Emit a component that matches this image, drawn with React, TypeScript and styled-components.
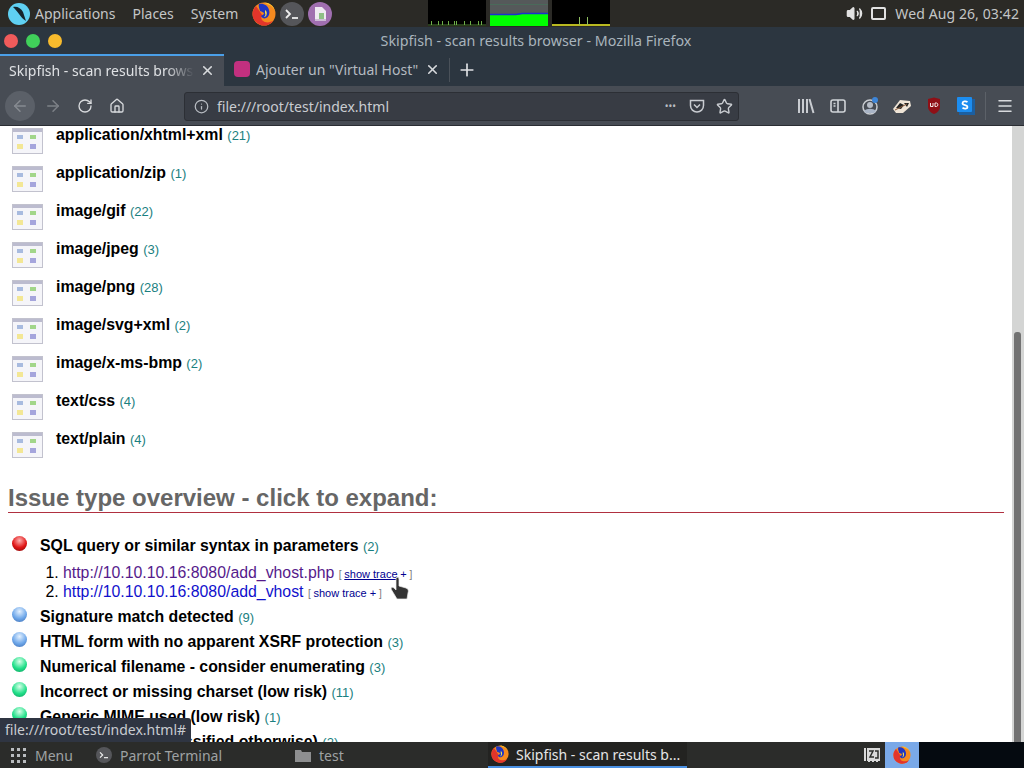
import React from "react";
import styled, { createGlobalStyle } from "styled-components";
import { ArrowLeft, ArrowRight, RotateCw, Home, Info, Plus, X, Star, Menu as MenuIcon, Volume2 } from "lucide-react";

const GlobalStyle = createGlobalStyle`
  html, body {
    margin: 0;
    padding: 0;
    background: #fff;
  }
  body {
    font-family: "Noto Sans", sans-serif;
  }
`;

const FirefoxLogo = ({ size }: { size: number }) => (
  <svg width={size} height={size} viewBox="0 0 24 24">
    <circle cx="12" cy="12" r="11.500" fill="#f58a1f" />
    <path d="M.5 12a11.500 11.500 0 0 0 21 6.500c-3 2-8 3-11 0-2-2-1-4 0-5L4 4C2 6 .5 9 .5 12z" fill="#e3352b" />
    <path d="M12 .5c5 0 10 3 11 9-1-3-3-6-7-7z" fill="#fdc62f" />
    <path d="M7 2c4-1 9 1 10 6 1 3 0 7-3 8-2 1-4 0-5-2l3-2c0-2-2-2-4-3 0-2-2-4-1-7z" fill="#1f36c4" />
    <path d="M13 8c2 1 2 3 1.500 5-.5 1.500-1.500 2-2.500 2 1-1 2-2 1-4z" fill="#f7e04a" />
  </svg>
);

const ParrotLogo = () => (
  <svg width="22" height="22" viewBox="0 0 22 22">
    <circle cx="11" cy="11" r="11" fill="#5fd0f2" />
    <path d="M5 4c4-1 8 1 10 5 1 3 2 6 3 9-3-2-5-4-7-7C9 8 7 6 5 4z" fill="#16242c" />
  </svg>
);

const TerminalGlyph = ({ size }: { size: number }) => (
  <svg width={size} height={size} viewBox="0 0 24 24">
    <circle cx="12" cy="12" r="12" fill="#55565a" />
    <path d="M6 8l4 4-4 4" fill="none" stroke="#eee" strokeWidth="1.8" />
    <path d="M12 16h6" stroke="#eee" strokeWidth="1.8" />
  </svg>
);

const NotesGlyph = () => (
  <svg width="24" height="24" viewBox="0 0 24 24">
    <circle cx="12" cy="12" r="12" fill="#a06fb0" />
    <path d="M7 5h7l4 4v10H7z" fill="#efe9f2" />
    <path d="M11 11h5v6h-5z" fill="#8fbf86" />
    <path d="M7 17h11v2H7z" fill="#cdbcd6" />
  </svg>
);

const Graph = ({ kind }: { kind: "cpu" | "mem" | "net" }) => {
  if (kind === "mem") {
    return (
      <svg width="58" height="26" viewBox="0 0 58 26">
        <rect width="58" height="26" fill="#55595a" />
        <rect y="4" width="58" height="1" fill="#4a6a5a" />
        <path d="M0 15h26l6-1h26v12H0z" fill="#00ff00" />
        <path d="M0 14.500h26l6-1h26" stroke="#1a2fd0" strokeWidth="1.6" fill="none" />
      </svg>
    );
  }
  const colour = kind === "cpu" ? "#6fae4a" : "#b8b820";
  const spikes = kind === "cpu" ? [3, 10, 14, 20, 26, 28, 36, 42, 50, 53] : [27, 35];
  return (
    <svg width="58" height="26" viewBox="0 0 58 26">
      <rect width="58" height="26" fill="#000" />
      <rect y="24" width="58" height="2" fill={colour} opacity={kind === "cpu" ? 0.35 : 1} />
      {spikes.map((x) => (
        <rect key={x} x={x} y={kind === "cpu" ? 21 : 17} width="1" height={kind === "cpu" ? 4 : 8} fill={kind === "cpu" ? colour : "#8fbf60"} />
      ))}
    </svg>
  );
};

const MimeIcon = () => (
  <svg width="31" height="26" viewBox="0 0 31 26">
    <rect x="0.5" y="0.5" width="30" height="25" fill="#f5f5f9" stroke="#c2c2ce" />
    <rect x="1" y="1" width="29" height="3" fill="#bcbccf" />
    <rect x="5" y="7" width="6" height="4" fill="#a8bbdf" />
    <rect x="18" y="7" width="6" height="4" fill="#a2d68a" />
    <rect x="5" y="16" width="6" height="5" fill="#f3e795" />
    <rect x="18" y="16" width="6" height="5" fill="#a5a5dc" />
  </svg>
);

const LibraryGlyph = () => (
  <svg width="18" height="18" viewBox="0 0 18 18" fill="none" stroke="#c9ccd1" strokeWidth="2">
    <path d="M2 2v14M6 2v14M10 2v14M12.500 2l4 14" />
  </svg>
);

const SidebarGlyph = () => (
  <svg width="18" height="18" viewBox="0 0 18 18" fill="none" stroke="#d0d3d7" strokeWidth="1.600">
    <rect x="2" y="3" width="14" height="12" rx="2" />
    <path d="M9 3v12M4.500 6.500h2M4.500 9h2" />
  </svg>
);

const AccountGlyph = () => (
  <svg width="20" height="20" viewBox="0 0 20 20">
    <circle cx="10" cy="11" r="7" fill="none" stroke="#c9ccd1" strokeWidth="1.500" />
    <circle cx="10" cy="9" r="3" fill="#b6bcc6" />
    <path d="M4 15c3-3 9-3 12 0l-2 2H6z" fill="#a9b4c6" />
    <circle cx="15" cy="4" r="3" fill="#3d85d8" />
  </svg>
);

const MaskGlyph = () => (
  <svg width="20" height="16" viewBox="0 0 20 16">
    <path d="M1 11L8 2l10 1 1 5-8 7H4z" fill="#efe4d6" />
    <path d="M4 10l4-5 4 2-3 4zM12 5l5 0-2 4z" fill="#232323" />
    <path d="M3 12l12-6" stroke="#8a5a3a" strokeWidth="1" />
  </svg>
);

const ShieldGlyph = () => (
  <svg width="16" height="18" viewBox="0 0 16 18">
    <path d="M2 2l6-1.500 6 1.500v8c0 3-3 6-6 7-3-1-6-4-6-7z" fill="#8f0f16" />
    <path d="M4.500 6v3.500h2.500V6M9 6h1.500a1.800 1.800 0 0 1 0 3.500H9z" fill="none" stroke="#f3e6e6" strokeWidth="1" />
  </svg>
);

const SkypeGlyph = () => (
  <svg width="18" height="18" viewBox="0 0 18 18">
    <rect x="2" y="2" width="16" height="16" fill="#1c5fa0" />
    <rect x="0" y="0" width="15" height="15" rx="1" fill="#1c8df0" />
    <path d="M10.500 5c-2-1.200-5-.6-5 1.200 0 2.600 5 1.400 5 3.800 0 1.800-3 2-5 .8" fill="none" stroke="#fff" strokeWidth="1.800" />
  </svg>
);

const PocketGlyph = () => (
  <svg width="16" height="16" viewBox="0 0 16 16" fill="none" stroke="#c9ccd1" strokeWidth="1.500">
    <path d="M1.500 2.500h13v5a6.500 6.500 0 0 1-13 0z" />
    <path d="M5 6.500l3 3 3-3" />
  </svg>
);

const GridGlyph = () => (
  <svg width="17" height="16" viewBox="0 0 17 16" fill="#b9bcbf">
    {[1, 7, 13].flatMap((y) =>
      [1, 7, 13].map((x) => <rect key={`${x}-${y}`} x={x} y={y} width="3" height="3" />)
    )}
  </svg>
);

const FolderGlyph = () => (
  <svg width="16" height="14" viewBox="0 0 16 14" fill="#8e8f90">
    <path d="M0 2h6l1 2h9v10H0z" />
  </svg>
);

const TrayGlyph = () => (
  <svg width="17" height="16" viewBox="0 0 17 16">
    <path d="M1 1h2v13H1zM4 1h13v13h-2v1h-2v-1h-2v1H9v-1H7v1H5v-1H4z" fill="#d9d9d9" />
    <path d="M6 4h4L7 10h4M12 4h3v7h-3" fill="none" stroke="#2b2c2a" strokeWidth="1.500" />
  </svg>
);

const HandCursor = () => (
  <svg width="20" height="24" viewBox="0 0 20 24">
    <path d="M6 1c1-1 3-1 3 1v7l7 2c2 1 3 2 2 5l-1 6H7L1 12c0-2 2-2 3-1l2 2z" fill="#333" stroke="#eee" strokeWidth="0.700" />
  </svg>
);

const mimeRows = [
  { name: "application/xhtml+xml", count: 21 },
  { name: "application/zip", count: 1 },
  { name: "image/gif", count: 22 },
  { name: "image/jpeg", count: 3 },
  { name: "image/png", count: 28 },
  { name: "image/svg+xml", count: 2 },
  { name: "image/x-ms-bmp", count: 2 },
  { name: "text/css", count: 4 },
  { name: "text/plain", count: 4 },
];

const lowerIssues = [
  { level: "blue", title: "Signature match detected", count: 9 },
  { level: "blue", title: "HTML form with no apparent XSRF protection", count: 3 },
  { level: "green", title: "Numerical filename - consider enumerating", count: 3 },
  { level: "green", title: "Incorrect or missing charset (low risk)", count: 11 },
  { level: "green", title: "Generic MIME used (low risk)", count: 1 },
  { level: "green", title: "HTML form (not classified otherwise)", count: 2 },
] as const;

const ballColours = {
  red: ["#ffb0b0", "#e01515", "#7a0505"],
  blue: ["#e4f1ff", "#6fa8ea", "#3a6ab0"],
  green: ["#d8ffe8", "#22e08a", "#0a9a5a"],
};

export default function App() {
  return (
    <Screen>
      <GlobalStyle />
      <TopPanel>
        <ParrotLogo />
        <PanelMenu>Applications</PanelMenu>
        <PanelMenu>Places</PanelMenu>
        <PanelMenu>System</PanelMenu>
        <Launchers>
          <FirefoxLogo size={24} />
          <TerminalGlyph size={24} />
          <NotesGlyph />
        </Launchers>
        <Graphs>
          <Graph kind="cpu" />
          <Graph kind="mem" />
          <Graph kind="net" />
        </Graphs>
        <Tray>
          <Volume2 size={17} color="#e2e2e2" fill="#e2e2e2" />
          <ScreenOutline />
          <Clock>Wed Aug 26, 03:42</Clock>
        </Tray>
      </TopPanel>

      <TitleBar>
        <Lights>
          <Light $colour="#ef5b5b" />
          <Light $colour="#40d05a" />
          <Light $colour="#f8bb2d" />
        </Lights>
        <WindowTitle>Skipfish - scan results browser - Mozilla Firefox</WindowTitle>
      </TitleBar>

      <TabBar>
        <ActiveTab>
          <TabLabel $fade>Skipfish - scan results browser</TabLabel>
          <TabClose><X size={15} strokeWidth={2.5} /></TabClose>
        </ActiveTab>
        <IdleTab>
          <Favicon />
          <TabLabel>Ajouter un "Virtual Host"</TabLabel>
          <TabClose><X size={15} strokeWidth={2.5} /></TabClose>
        </IdleTab>
        <NewTab><Plus size={20} /></NewTab>
      </TabBar>

      <NavBar>
        <BackButton><ArrowLeft size={18} /></BackButton>
        <NavButton $dim><ArrowRight size={18} /></NavButton>
        <NavButton><RotateCw size={16} /></NavButton>
        <NavButton><Home size={16} /></NavButton>
        <UrlBar>
          <Info size={15} color="#b8bcc2" />
          <UrlText>file:///root/test/index.html</UrlText>
          <UrlActions>
            <Dots>•••</Dots>
            <PocketGlyph />
            <Star size={17} color="#c9ccd1" />
          </UrlActions>
        </UrlBar>
        <Toolbox>
          <LibraryGlyph />
          <SidebarGlyph />
          <AccountGlyph />
          <MaskGlyph />
          <ShieldGlyph />
          <SkypeGlyph />
        </Toolbox>
        <Hamburger><MenuIcon size={18} /></Hamburger>
      </NavBar>

      <Viewport>
        <Page>
          <MimeList>
            {mimeRows.map((row) => (
              <MimeRow key={row.name}>
                <MimeIcon />
                <MimeText>
                  <MimeName>{row.name}</MimeName> <Count>({row.count})</Count>
                </MimeText>
              </MimeRow>
            ))}
          </MimeList>

          <Heading>Issue type overview - click to expand:</Heading>

          <IssueList>
            <IssueRow>
              <Ball $level="red" />
              <span>
                <IssueTitle>SQL query or similar syntax in parameters</IssueTitle> <Count>(2)</Count>
              </span>
            </IssueRow>
            <Urls>
              <UrlItem>
                <VisitedLink>http://10.10.10.16:8080/add_vhost.php</VisitedLink>{" "}
                <Trace>[ <TraceHover>show trace</TraceHover> <TraceLabel>+</TraceLabel> ]</Trace>
              </UrlItem>
              <UrlItem>
                <UrlLink>http://10.10.10.16:8080/add_vhost</UrlLink>{" "}
                <Trace>[ <TraceLabel>show trace +</TraceLabel> ]</Trace>
              </UrlItem>
            </Urls>
            {lowerIssues.map((issue) => (
              <IssueRow key={issue.title}>
                <Ball $level={issue.level} />
                <span>
                  <IssueTitle>{issue.title}</IssueTitle> <Count>({issue.count})</Count>
                </span>
              </IssueRow>
            ))}
          </IssueList>
        </Page>
        <ScrollTrack>
          <ScrollThumb />
        </ScrollTrack>
        <Pointer><HandCursor /></Pointer>
        <StatusTip>file:///root/test/index.html#</StatusTip>
      </Viewport>

      <Taskbar>
        <TaskItem $width={86}><GridGlyph /><span>Menu</span></TaskItem>
        <TaskItem $width={199}><TerminalGlyph size={16} /><span>Parrot Terminal</span></TaskItem>
        <TaskItem $width={203}><FolderGlyph /><span>test</span></TaskItem>
        <ActiveTask><FirefoxLogo size={18} /><span>Skipfish - scan results b...</span></ActiveTask>
        <TaskTray>
          <TrayGlyph />
          <TrayHighlight><FirefoxLogo size={18} /></TrayHighlight>
        </TaskTray>
        <TaskbarEnd />
      </Taskbar>
    </Screen>
  );
}

const Screen = styled.div`
  width: 1024px;
  height: 768px;
  display: flex;
  flex-direction: column;
  overflow: hidden;
`;

const TopPanel = styled.div`
  height: 27px;
  flex: none;
  display: flex;
  align-items: center;
  padding-left: 8px;
  background: #2b2a26;
  color: #c4c6c6;
  font-size: 14px;
`;

const PanelMenu = styled.span`
  margin-left: 5px;
  margin-right: 12px;
`;

const Launchers = styled.div`
  display: flex;
  align-items: center;
  gap: 4px;
  margin-left: 2px;
  width: 176px;
  flex: none;
`;

const Graphs = styled.div`
  display: flex;
  gap: 4px;
  align-self: flex-start;
`;

const Tray = styled.div`
  margin-left: auto;
  padding-right: 5px;
  display: flex;
  align-items: center;
  gap: 8px;
  color: #c4c6c6;
`;

const Clock = styled.span`
  letter-spacing: 0.1px;
`;

const ScreenOutline = styled.div`
  width: 11px;
  height: 9px;
  border: 2px solid #e2e2e2;
  border-radius: 2px;
  margin-right: 1px;
`;

const TitleBar = styled.div`
  height: 27px;
  flex: none;
  display: flex;
  align-items: center;
  background: #2c3640;
`;

const Lights = styled.div`
  display: flex;
  gap: 8px;
  padding-left: 4px;
  width: 44px;
  flex: none;
`;

const Light = styled.div<{ $colour: string }>`
  width: 14px;
  height: 14px;
  flex: none;
  border-radius: 50%;
  background: ${(p) => p.$colour};
`;

const WindowTitle = styled.div`
  flex: 1;
  text-align: center;
  color: #a9b4bc;
  font-size: 14.3px;
`;

const TabBar = styled.div`
  height: 32px;
  flex: none;
  display: flex;
  background: #2c3640;
  color: #c9ccd1;
  font-size: 14px;
`;

const ActiveTab = styled.div`
  width: 224px;
  box-sizing: border-box;
  display: flex;
  align-items: center;
  padding: 0 9px 2px;
  border-top: 2px solid #4a9fe8;
  background: #474c54;
  color: #dfe1e4;
`;

const IdleTab = styled.div`
  width: 225px;
  box-sizing: border-box;
  display: flex;
  align-items: center;
  gap: 6px;
  padding: 0 9px 2px 10px;
  color: #b4bac0;
`;

const TabLabel = styled.span<{ $fade?: boolean }>`
  flex: 1;
  overflow: hidden;
  white-space: nowrap;
  ${(p) => p.$fade && "mask-image: linear-gradient(to right, #000 82%, transparent 97%);"}
`;

const TabClose = styled.span`
  display: flex;
  color: #d8dadd;
`;

const Favicon = styled.span`
  width: 16px;
  height: 16px;
  flex: none;
  border-radius: 4px;
  background: #c2307f;
`;

const NewTab = styled.div`
  display: flex;
  align-items: center;
  margin: 4px 0;
  padding: 0 7px;
  border-left: 1px solid #4a5159;
  color: #dfe1e4;
`;

const NavBar = styled.div`
  height: 40px;
  flex: none;
  box-sizing: border-box;
  display: flex;
  align-items: center;
  padding: 1px 0 0 5px;
  background: #474c54;
  border-bottom: 1px solid #2a2d33;
  color: #d8dadd;
`;

const BackButton = styled.div`
  width: 30px;
  height: 30px;
  flex: none;
  display: flex;
  align-items: center;
  justify-content: center;
  margin-right: 2px;
  border-radius: 50%;
  background: #5b6068;
  color: #878b91;
`;

const NavButton = styled.div<{ $dim?: boolean }>`
  width: 32px;
  flex: none;
  display: flex;
  justify-content: center;
  color: ${(p) => (p.$dim ? "#7d8187" : "#d8dadd")};
`;

const UrlBar = styled.div`
  width: 555px;
  height: 29px;
  flex: none;
  box-sizing: border-box;
  margin-left: 51px;
  display: flex;
  align-items: center;
  gap: 8px;
  padding: 0 5px 0 9px;
  background: #383c44;
  border: 1px solid #2c2f35;
  border-radius: 3px;
`;

const UrlText = styled.span`
  color: #c9ccd1;
  font-size: 14px;
`;

const UrlActions = styled.div`
  margin-left: auto;
  display: flex;
  align-items: center;
  gap: 11px;
`;

const Dots = styled.span`
  color: #b8bcc2;
  font-size: 10px;
  margin-right: 2px;
`;

const Toolbox = styled.div`
  display: grid;
  grid-template-columns: repeat(6, 32px);
  justify-items: center;
  align-items: center;
  margin-left: 51px;
  padding-right: 3px;
  border-right: 1px solid #5c6168;
  height: 28px;
`;

const Hamburger = styled.div`
  display: flex;
  margin-left: 10px;
`;

const Viewport = styled.div`
  flex: 1;
  min-height: 0;
  position: relative;
  display: flex;
  background: #fff;
`;

const Page = styled.div`
  flex: 1;
  overflow: hidden;
  padding: 2px 8px 0;
  font-family: "Liberation Sans", Arial, sans-serif;
`;

const MimeList = styled.div`
  padding-left: 4px;
`;

const MimeRow = styled.div`
  height: 38px;
  display: flex;
  gap: 13px;
  line-height: 18px;
`;

const MimeText = styled.div`
  margin-top: -2px;
`;

const MimeName = styled.b`
  font-size: 15.85px;
  color: #000;
`;

const Count = styled.span`
  font-size: 13px;
  color: #1a8080;
`;

const Heading = styled.h2`
  margin: 14px 0 0;
  height: 28px;
  line-height: 28px;
  font-size: 24px;
  font-weight: bold;
  color: #666;
  border-bottom: 1px solid #b03040;
`;

const IssueList = styled.div`
  margin-top: 20px;
`;

const IssueRow = styled.div`
  height: 25px;
  display: flex;
  align-items: center;
  white-space: pre;
  padding-left: 4px;
`;

const Ball = styled.span<{ $level: keyof typeof ballColours }>`
  width: 15px;
  height: 15px;
  flex: none;
  margin-right: 13px;
  margin-top: -5px;
  border-radius: 50%;
  background: radial-gradient(circle at 50% 30%, ${(p) => ballColours[p.$level][0]} 0%, ${(p) => ballColours[p.$level][1]} 55%, ${(p) => ballColours[p.$level][2]} 100%);
`;

const IssueTitle = styled.b`
  font-size: 15.85px;
  color: #000;
`;

const Urls = styled.ol`
  margin: 5px 0 3px;
  padding-left: 55px;
  font-size: 15.85px;
  color: #000;
`;

const UrlItem = styled.li`
  height: 19px;
  line-height: 19px;
`;

const VisitedLink = styled.span`
  color: #551a8b;
`;

const UrlLink = styled.span`
  color: #1010cc;
`;

const Trace = styled.span`
  font-size: 10px;
  line-height: 1;
  color: #777;
`;

const TraceHover = styled.span`
  font-size: 11px;
  color: #000090;
  text-decoration: underline;
`;

const TraceLabel = styled.span`
  font-size: 11px;
  color: #000090;
`;

const ScrollTrack = styled.div`
  width: 12px;
  flex: none;
  background: #d4d5d4;
  display: flex;
  flex-direction: column;
  justify-content: flex-end;
`;

const ScrollThumb = styled.div`
  height: 410px;
  width: 7px;
  margin-left: 2px;
  background: #727272;
  border-radius: 3px 3px 0 0;
`;

const Pointer = styled.div`
  position: absolute;
  left: 390px;
  top: 451px;
  line-height: 0;
`;

const StatusTip = styled.div`
  position: absolute;
  left: 0;
  bottom: 0;
  height: 24px;
  line-height: 24px;
  padding: 0 5px;
  background: #2f3542;
  color: #c9ccd1;
  font-size: 14px;
  border-top-right-radius: 3px;
`;

const Taskbar = styled.div`
  height: 26px;
  flex: none;
  display: flex;
  background: #2b2c2a;
  color: #9fa2a3;
  font-size: 14px;
`;

const TaskItem = styled.div<{ $width: number }>`
  width: ${(p) => p.$width}px;
  flex: none;
  box-sizing: border-box;
  display: flex;
  align-items: center;
  gap: 8px;
  padding-left: 10px;
`;

const ActiveTask = styled.div`
  width: 199px;
  flex: none;
  box-sizing: border-box;
  display: flex;
  align-items: center;
  gap: 7px;
  padding-left: 3px;
  background: #232321;
  border-bottom: 2px solid #4a90e2;
  color: #e6e6e6;
  white-space: nowrap;
`;

const TaskTray = styled.div`
  width: 232px;
  flex: none;
  display: flex;
  align-items: center;
  justify-content: flex-end;
  gap: 5px;
`;

const TrayHighlight = styled.div`
  width: 34px;
  height: 26px;
  display: flex;
  align-items: center;
  justify-content: center;
  background: #7aa9e8;
`;

const TaskbarEnd = styled.div`
  flex: 1;
  background: #050a10;
`;
